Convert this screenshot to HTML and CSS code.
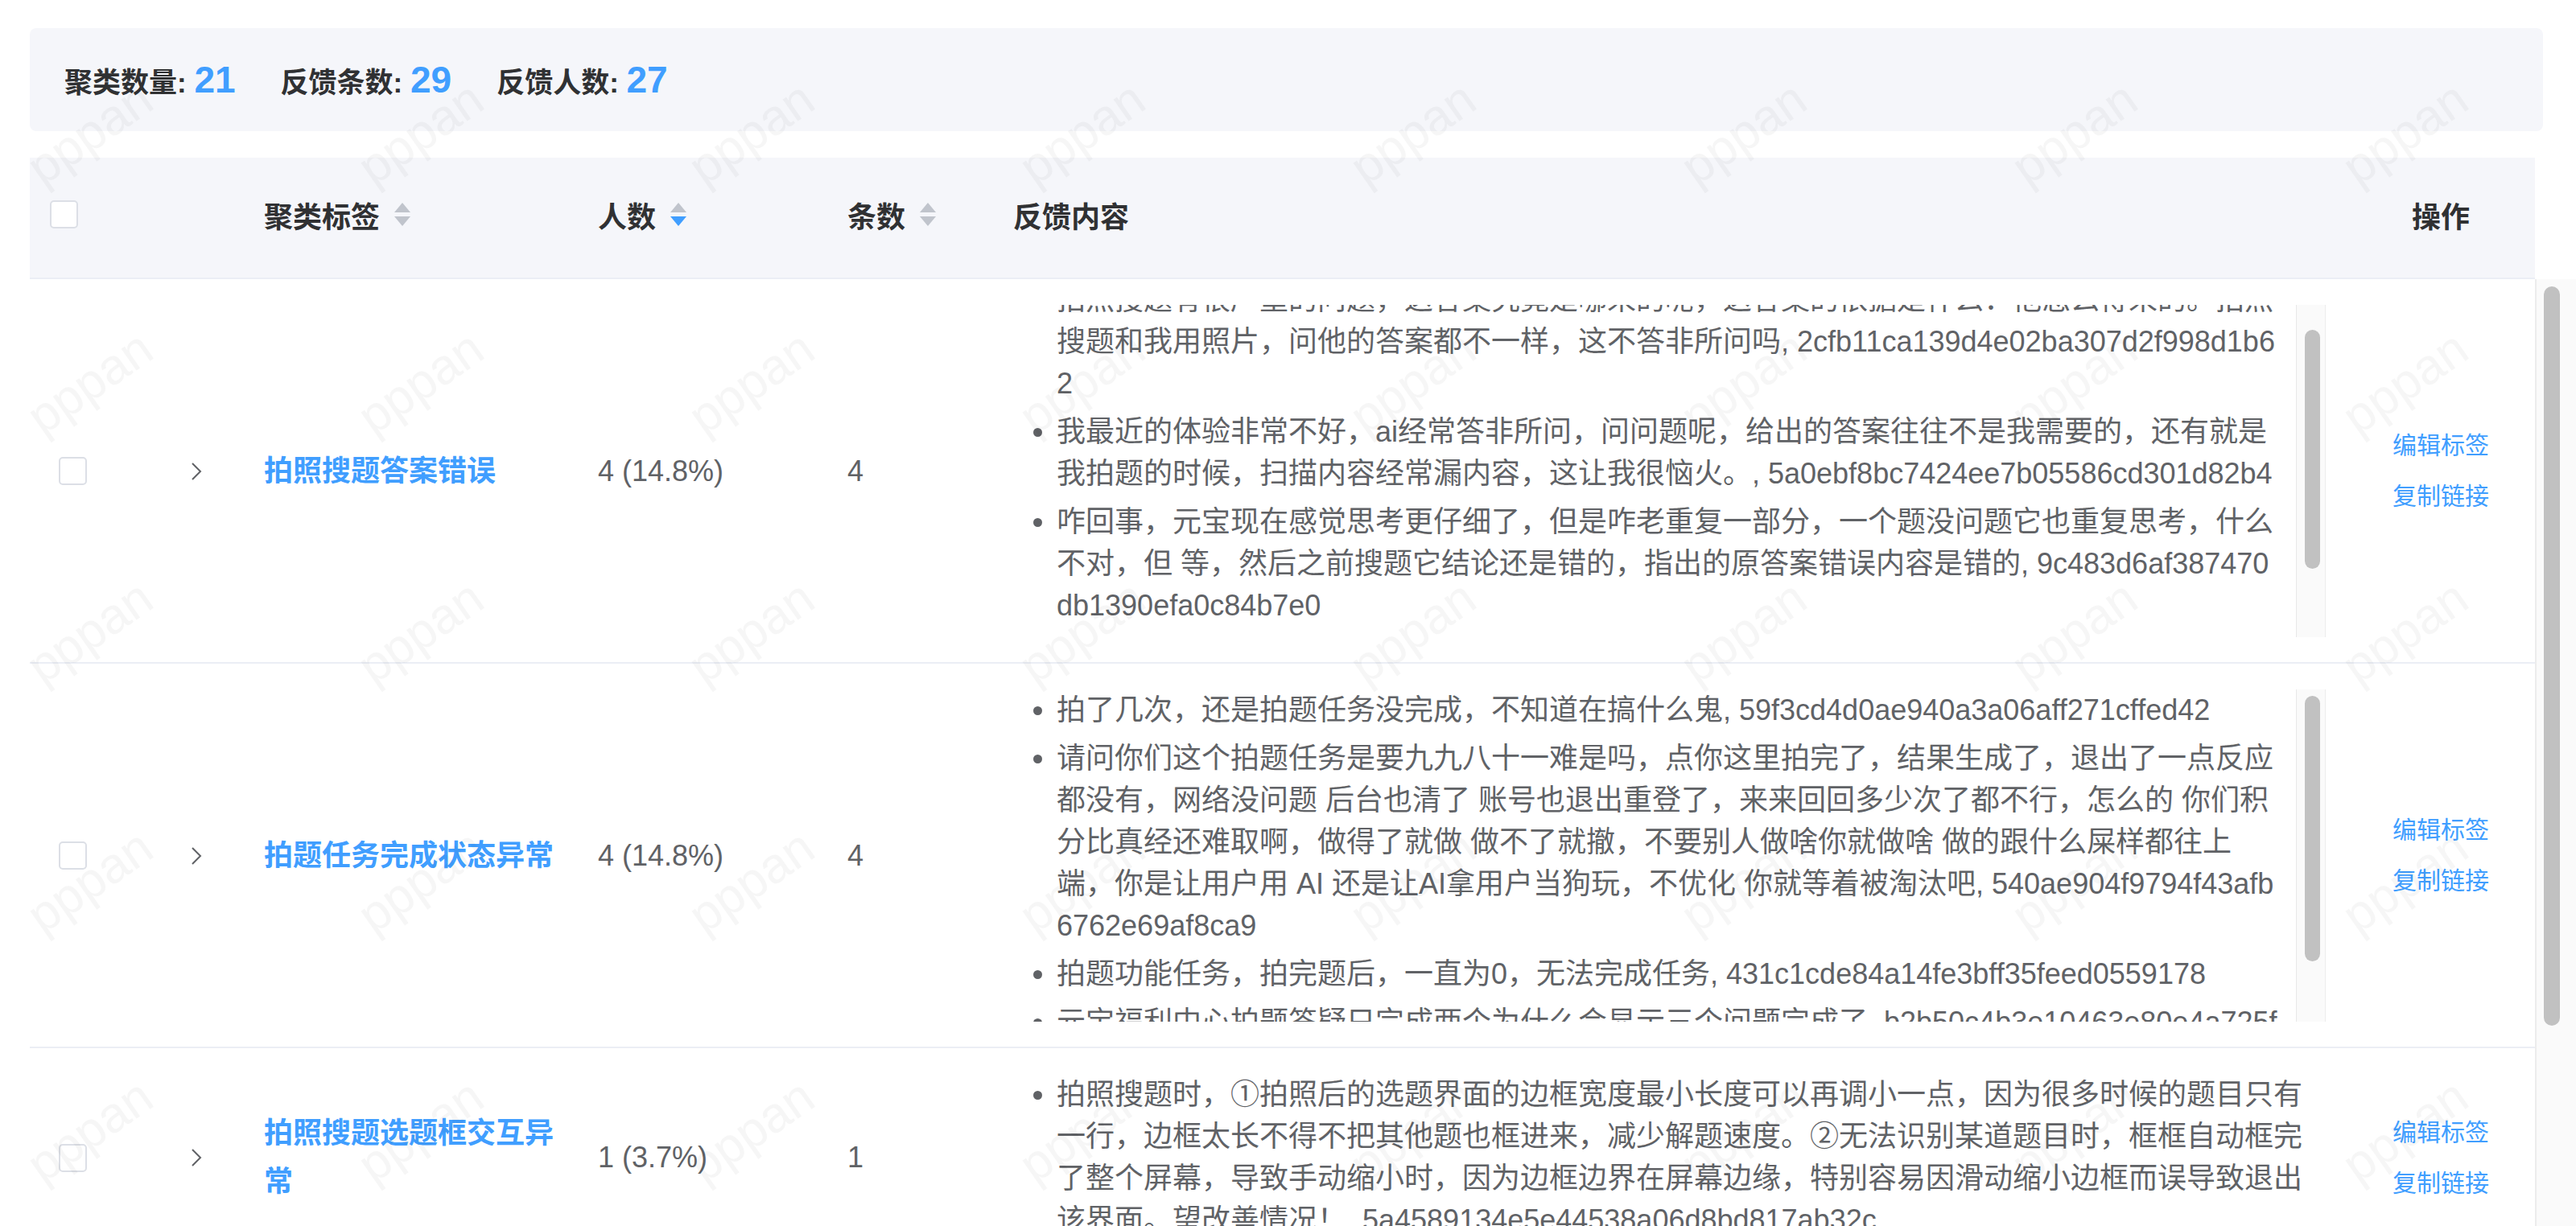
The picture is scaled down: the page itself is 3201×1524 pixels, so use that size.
FILE: index.html
```html
<!DOCTYPE html>
<html lang="zh-CN">
<head>
    <meta charset="UTF-8">
    <meta name="viewport" content="width=device-width, initial-scale=1.0">
    <title>聚类反馈</title>
    <link rel="stylesheet" href="styles.css">
</head>
<body>
    <div class="page">
        <div class="summary">
            <div class="summary-item">聚类数量: <b>21</b></div>
            <div class="summary-item">反馈条数: <b>29</b></div>
            <div class="summary-item">反馈人数: <b>27</b></div>
        </div>

        <div class="table">
            <div class="table-head">
                <div class="th th-check"><span class="checkbox"></span></div>
                <div class="th"></div>
                <div class="th">聚类标签
                    <svg class="caret" width="20" height="30" viewBox="0 0 20 30"><path d="M10 0 L20 12 L0 12 Z"/><path d="M0 17 L20 17 L10 29 Z"/></svg>
                </div>
                <div class="th">人数
                    <svg class="caret" width="20" height="30" viewBox="0 0 20 30"><path d="M10 0 L20 12 L0 12 Z"/><path class="active" d="M0 17 L20 17 L10 29 Z"/></svg>
                </div>
                <div class="th">条数
                    <svg class="caret" width="20" height="30" viewBox="0 0 20 30"><path d="M10 0 L20 12 L0 12 Z"/><path d="M0 17 L20 17 L10 29 Z"/></svg>
                </div>
                <div class="th">反馈内容</div>
                <div class="th th-center">操作</div>
            </div>

            <div class="table-main">
                <div class="table-body">
                    <div class="row">
                        <div class="td td-check"><span class="checkbox"></span></div>
                        <div class="td"><svg class="chevron" width="14" height="24" viewBox="0 0 14 24"><polyline points="2,2 12,12 2,22"/></svg></div>
                        <div class="td label">拍照搜题答案错误</div>
                        <div class="td">4 (14.8%)</div>
                        <div class="td">4</div>
                        <div class="td td-content">
                            <div class="feedback-box">
                                <div class="feedback-scroll" id="scrolled">
                                    <ul class="feedback-list">
                                        <li>拍照搜题有很严重的问题，这答案究竟是哪来的呢，这答案的依据是什么：他怎么得来的。拍照搜题和我用照片，问他的答案都不一样，这不答非所问吗, 2cfb11ca139d4e02ba307d2f998d1b62</li>
                                        <li>我最近的体验非常不好，ai经常答非所问，问问题呢，给出的答案往往不是我需要的，还有就是我拍题的时候，扫描内容经常漏内容，这让我很恼火。, 5a0ebf8bc7424ee7b05586cd301d82b4</li>
                                        <li>咋回事，元宝现在感觉思考更仔细了，但是咋老重复一部分，一个题没问题它也重复思考，什么不对，但 等，然后之前搜题它结论还是错的，指出的原答案错误内容是错的, 9c483d6af387470db1390efa0c84b7e0</li>
                                        <li>拍照搜题识别出来的题目和原题不一致，经常少字或者错字，导致给出的答案完全不对，希望尽快优化一下, 7d1e3f0a9b2c4d5e8f6a1b2c3d4e5f60</li>
                                    </ul>
                                </div>
                                <div class="scroll-track"><div class="scroll-thumb" style="top: 31px; height: 297px;"></div></div>
                            </div>
                        </div>
                        <div class="td td-actions">
                            <a class="action">编辑标签</a>
                            <a class="action">复制链接</a>
                        </div>
                    </div>

                    <div class="row">
                        <div class="td td-check"><span class="checkbox"></span></div>
                        <div class="td"><svg class="chevron" width="14" height="24" viewBox="0 0 14 24"><polyline points="2,2 12,12 2,22"/></svg></div>
                        <div class="td label">拍题任务完成状态异常</div>
                        <div class="td">4 (14.8%)</div>
                        <div class="td">4</div>
                        <div class="td td-content">
                            <div class="feedback-box">
                                <div class="feedback-scroll">
                                    <ul class="feedback-list">
                                        <li>拍了几次，还是拍题任务没完成，不知道在搞什么鬼, 59f3cd4d0ae940a3a06aff271cffed42</li>
                                        <li>请问你们这个拍题任务是要九九八十一难是吗，点你这里拍完了，结果生成了，退出了一点反应都没有，网络没问题 后台也清了 账号也退出重登了，来来回回多少次了都不行，怎么的 你们积分比真经还难取啊，做得了就做 做不了就撤，不要别人做啥你就做啥 做的跟什么屎样都往上端，你是让用户用 AI 还是让AI拿用户当狗玩，不优化 你就等着被淘汰吧, 540ae904f9794f43afb6762e69af8ca9</li>
                                        <li>拍题功能任务，拍完题后，一直为0，无法完成任务, 431c1cde84a14fe3bff35feed0559178</li>
                                        <li>元宝福利中心拍题答疑只完成两个为什么会显示三个问题完成了, b2b50c4b3e10463e80e4a725ff6d91c3</li>
                                    </ul>
                                </div>
                                <div class="scroll-track"><div class="scroll-thumb" style="top: 8px; height: 330px;"></div></div>
                            </div>
                        </div>
                        <div class="td td-actions">
                            <a class="action">编辑标签</a>
                            <a class="action">复制链接</a>
                        </div>
                    </div>

                    <div class="row">
                        <div class="td td-check"><span class="checkbox"></span></div>
                        <div class="td"><svg class="chevron" width="14" height="24" viewBox="0 0 14 24"><polyline points="2,2 12,12 2,22"/></svg></div>
                        <div class="td label">拍照搜题选题框交互异常</div>
                        <div class="td">1 (3.7%)</div>
                        <div class="td">1</div>
                        <div class="td td-content">
                            <ul class="feedback-list">
                                <li>拍照搜题时，①拍照后的选题界面的边框宽度最小长度可以再调小一点，因为很多时候的题目只有一行，边框太长不得不把其他题也框进来，减少解题速度。②无法识别某道题目时，框框自动框完了整个屏幕，导致手动缩小时，因为边框边界在屏幕边缘，特别容易因滑动缩小边框而误导致退出该界面。望改善情况！, 5a4589134e5e44538a06d8bd817ab32c</li>
                            </ul>
                        </div>
                        <div class="td td-actions">
                            <a class="action">编辑标签</a>
                            <a class="action">复制链接</a>
                        </div>
                    </div>

                    <div class="row">
                        <div class="td td-check"><span class="checkbox"></span></div>
                        <div class="td"><svg class="chevron" width="14" height="24" viewBox="0 0 14 24"><polyline points="2,2 12,12 2,22"/></svg></div>
                        <div class="td label">拍照识别不准确</div>
                        <div class="td">1 (3.7%)</div>
                        <div class="td">1</div>
                        <div class="td td-content">
                            <ul class="feedback-list">
                                <li>拍照的时候经常识别不出来题目，要拍好几次才行, 0f3a6c1d2e4b4f8a9c7d5e6f1a2b3c4d</li>
                            </ul>
                        </div>
                        <div class="td td-actions">
                            <a class="action">编辑标签</a>
                            <a class="action">复制链接</a>
                        </div>
                    </div>
                </div>
                <div class="page-scroll"><div class="scroll-thumb" style="top: 9px; height: 919px;"></div></div>
            </div>
        </div>
    </div>

    <svg class="watermark" width="100%" height="100%">
        <defs>
            <pattern id="wm" width="411" height="310" patternUnits="userSpaceOnUse">
                <text x="53" y="232" transform="rotate(-35 53 232)">pppan</text>
            </pattern>
        </defs>
        <rect width="100%" height="100%" fill="url(#wm)"/>
    </svg>

    <script>
        // first row's feedback list is scrolled a little
        document.getElementById('scrolled').scrollTop = 32;
    </script>
</body>
</html>
```

FILE: styles.css
```css
html, body {
    margin: 0;
    height: 100%;
}
body {
    font-family: "Helvetica Neue", Helvetica, "Liberation Sans", Arial, "Noto Sans CJK SC", sans-serif;
    background: #fff;
    color: #606266;
    font-size: 36px;
    overflow: hidden;
}
.page {
    height: 100vh;
    box-sizing: border-box;
    padding: 35px 0 0 37px;
    display: flex;
    flex-direction: column;
}
.summary {
    height: 128px;
    flex: none;
    margin-right: 41px;
    padding-left: 43px;
    background: #f5f6fa;
    border-radius: 8px;
    display: flex;
    align-items: center;
}
.summary-item {
    font-size: 35px;
    font-weight: bold;
    color: #303133;
    margin-right: 56px;
}
.summary-item b {
    font-size: 46px;
    color: #409eff;
}
.table {
    margin-top: 33px;
    flex: 1;
    min-height: 0;
    display: flex;
    flex-direction: column;
}
.table-head,
.row {
    display: grid;
    grid-template-columns: 176px 91px 415px 310px 206px 1fr 234px;
    align-items: center;
}
.table-head {
    flex: none;
    height: 149px;
    margin-right: 51px;
    background: #f5f6fa;
    border-bottom: 2px solid #ebeef5;
}
.th {
    padding-left: 24px;
    padding-bottom: 8px;
    font-weight: bold;
    color: #303133;
    display: flex;
    align-items: center;
}
.th-check {
    padding-left: 25px;
}
.th-center {
    padding-left: 0;
    justify-content: center;
}
.caret {
    margin-left: 18px;
    fill: #c0c4cc;
}
.caret .active {
    fill: #409eff;
}
.checkbox {
    display: block;
    width: 35px;
    height: 35px;
    box-sizing: border-box;
    border: 2px solid #dcdfe6;
    border-radius: 5px;
    background: #fff;
}
.table-main {
    flex: 1;
    min-height: 0;
    display: flex;
}
.table-body {
    flex: 1;
    overflow: hidden;
}
.row {
    padding: 32px 0 31px;
    border-bottom: 2px solid #ebeef5;
}
.td {
    padding-left: 24px;
    line-height: 52px;
}
.td-check {
    padding-left: 36px;
}
.chevron {
    display: block;
    fill: none;
    stroke: #606266;
    stroke-width: 2;
}
.label {
    padding-right: 24px;
    color: #409eff;
    font-weight: bold;
    line-height: 60px;
}
.td-content {
    padding-right: 26px;
}
.feedback-box {
    height: 413px;
    display: flex;
}
.feedback-scroll {
    flex: 1;
    overflow: hidden;
}
.feedback-list {
    margin: 0;
    padding: 0 18px 0 54px;
    word-break: break-all;
}
.feedback-list li {
    margin-bottom: 8px;
}
.feedback-list li:last-child {
    margin-bottom: 0;
}
.scroll-track {
    width: 35px;
    flex: none;
    position: relative;
    background: #fafafa;
    border-left: 1px solid #e8e8e8;
    border-right: 1px solid #ececec;
}
.scroll-track .scroll-thumb {
    left: 10px;
    width: 19px;
}
.scroll-thumb {
    position: absolute;
    background: #c1c1c1;
    border-radius: 10px;
}
.page-scroll {
    width: 49px;
    flex: none;
    position: relative;
    background: #fafafa;
    border-left: 2px solid #ececec;
}
.page-scroll .scroll-thumb {
    left: 9px;
    width: 20px;
}
.td-actions {
    padding-left: 0;
    text-align: center;
    font-size: 30px;
    line-height: 42px;
}
.action {
    display: block;
    color: #409eff;
    cursor: pointer;
}
.action + .action {
    margin-top: 21px;
}
.watermark {
    position: fixed;
    top: 0;
    left: 0;
    pointer-events: none;
}
.watermark text {
    font-family: "Liberation Sans", Arial, sans-serif;
    font-size: 62px;
    fill: #000;
    fill-opacity: 0.035;
}
```
